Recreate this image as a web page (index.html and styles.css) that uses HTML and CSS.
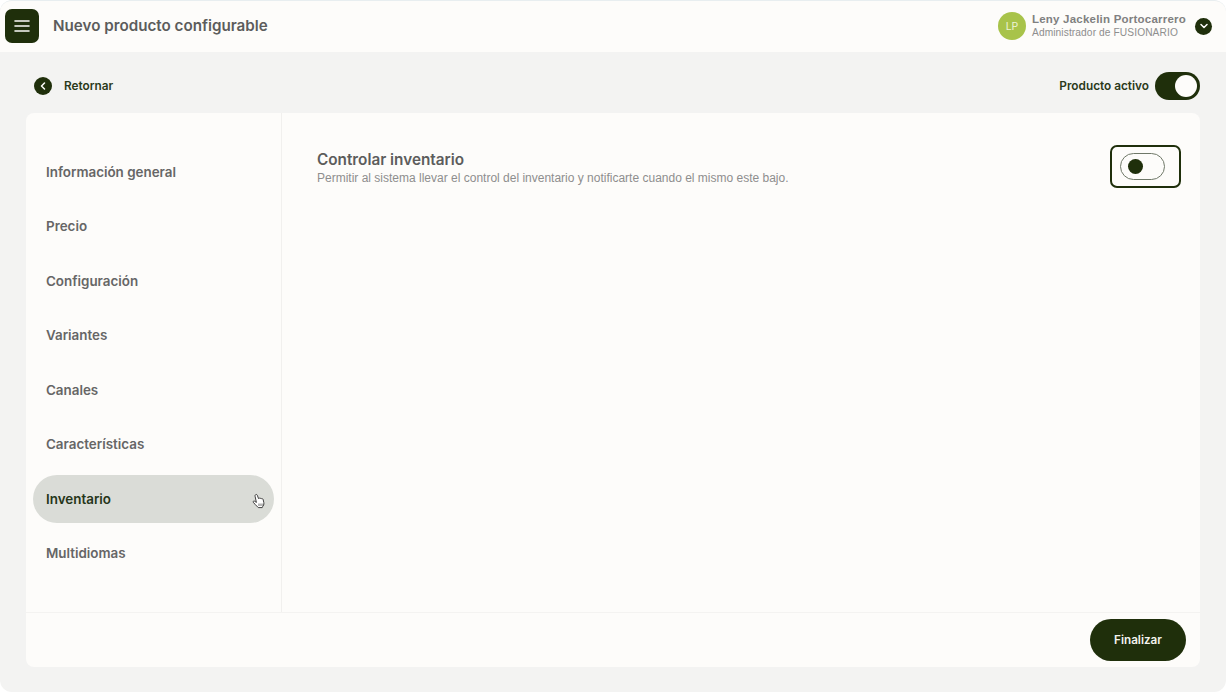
FILE: index.html
```html
<!DOCTYPE html>
<html lang="es">
<head>
  <meta charset="UTF-8">
  <title>Nuevo producto configurable</title>
  <link rel="stylesheet" href="styles.css">
</head>
<body>
  <main class="app">
    <header class="topbar">
      <button class="menu-btn" aria-label="Menu">
        <svg width="16" height="14" viewBox="0 0 16 14"><path d="M1 2h14M1 7h14M1 12h14" stroke="#fdfcfa" stroke-width="1.6" stroke-linecap="round"/></svg>
      </button>
      <h1>Nuevo producto configurable</h1>
      <div class="user">
        <span class="avatar">LP</span>
        <div class="user-text">
          <strong>Leny Jackelin Portocarrero</strong>
          <small>Administrador de FUSIONARIO</small>
        </div>
        <span class="round-icon small">
          <svg width="8" height="6" viewBox="0 0 8 6"><path d="M1 1.500l3 3 3-3" fill="none" stroke="#fdfcfa" stroke-width="1.500" stroke-linecap="round" stroke-linejoin="round"/></svg>
        </span>
      </div>
    </header>

    <section class="content">
      <div class="subbar">
        <a class="back">
          <span class="round-icon">
            <svg width="6" height="8" viewBox="0 0 6 8"><path d="M4.500 1L1.500 4l3 3" fill="none" stroke="#fdfcfa" stroke-width="1.500" stroke-linecap="round" stroke-linejoin="round"/></svg>
          </span>
          Retornar
        </a>
        <div class="active-toggle">
          Producto activo
          <span class="switch-on"><span></span></span>
        </div>
      </div>

      <div class="card">
        <div class="card-body">
          <nav class="side">
            <a>Información general</a>
            <a>Precio</a>
            <a>Configuración</a>
            <a>Variantes</a>
            <a>Canales</a>
            <a>Características</a>
            <a class="current">Inventario
              <svg class="cursor" width="14" height="17" viewBox="0 0 14 17"><path d="M3.600 1.700c.7-.5 1.500-.1 1.800.7l1.100 3.200c.3-.7 1.300-.7 1.600 0 .4-.5 1.300-.4 1.600.2.500-.3 1.200 0 1.400.6l.7 3.100c.3 1.500-.1 2.800-1 3.800l-.6 1.300H6.300L3.400 11.700 1.300 9.300c-.5-.7.3-1.600 1.100-1.200l2 1.300L3.100 3.300c-.2-.6 0-1.200.5-1.600z" fill="#fff" stroke="#2b2b2b" stroke-width=".9" stroke-linejoin="round"/><path d="M7 10.500v2.500M9 10.500v2.500M11 10.500v2.500" stroke="#2b2b2b" stroke-width=".7"/></svg>
            </a>
            <a>Multidiomas</a>
          </nav>
          <div class="panel">
            <div class="panel-text">
              <h2>Controlar inventario</h2>
              <p>Permitir al sistema llevar el control del inventario y notificarte cuando el mismo este bajo.</p>
            </div>
            <div class="focus-ring">
              <span class="switch-off"><span></span></span>
            </div>
          </div>
        </div>
        <footer class="card-foot">
          <button class="finish">Finalizar</button>
        </footer>
      </div>
    </section>
  </main>
</body>
</html>
```

FILE: styles.css
```css
* {
  margin: 0;
  padding: 0;
  box-sizing: border-box;
}

html, body {
  height: 100%;
}

body {
  background: #ffffff;
  font-family: 'Inter', 'Liberation Sans', sans-serif;
  color: #5f5f5f;
  overflow: hidden;
}

.app {
  height: 692px;
  background: #f3f3f2;
  border-radius: 12px;
  border-top: 1px solid #e8eef0;
  overflow: hidden;
}

.topbar {
  height: 51px;
  background: #fdfcfa;
  display: flex;
  align-items: center;
  padding: 0 14px 1px 5px;
  border-radius: 10px 10px 0 0;
}

.menu-btn {
  width: 34px;
  height: 34px;
  border: none;
  border-radius: 7px;
  background: #1f2f0b;
  display: flex;
  align-items: center;
  justify-content: center;
}

.topbar h1 {
  margin-left: 14px;
  font-size: 15.200px;
  line-height: 20px;
  font-weight: 600;
  color: #5c5c5c;
}

.user {
  margin-left: auto;
  display: flex;
  align-items: center;
}

.avatar {
  width: 28px;
  height: 28px;
  border-radius: 50%;
  background: #a8c34a;
  color: #eef3d8;
  font-size: 10.500px;
  display: flex;
  align-items: center;
  justify-content: center;
}

.user-text {
  margin-left: 6px;
  display: flex;
  flex-direction: column;
  font-family: 'Liberation Sans', sans-serif;
}

.user-text strong {
  font-size: 11.500px;
  line-height: 13px;
  font-weight: 700;
  color: #808080;
  letter-spacing: .22px;
}

.user-text small {
  font-size: 10.200px;
  line-height: 13px;
  color: #8e8e8e;
  letter-spacing: .1px;
}

.round-icon {
  width: 18px;
  height: 18px;
  border-radius: 50%;
  background: #1f2f0b;
  display: flex;
  align-items: center;
  justify-content: center;
  flex: none;
}

.round-icon.small {
  width: 17px;
  height: 17px;
  margin-left: 9px;
}

.content {
  padding: 0 26px;
}

.subbar {
  height: 61px;
  display: flex;
  align-items: center;
  justify-content: space-between;
  padding: 7px 0 0 8px;
  font-size: 11.800px;
  font-weight: 600;
  color: #2b3a1a;
}

.back {
  display: flex;
  align-items: center;
  gap: 12px;
}

.active-toggle {
  display: flex;
  align-items: center;
  gap: 6px;
}

.switch-on {
  width: 45px;
  height: 28px;
  border-radius: 14px;
  background: #1f2f0b;
  display: flex;
  align-items: center;
  justify-content: flex-end;
  padding-right: 3px;
}

.switch-on span {
  width: 22px;
  height: 22px;
  border-radius: 50%;
  background: #fdfcfa;
}

.card {
  height: 554px;
  background: #fdfcfa;
  border-radius: 8px;
  display: flex;
  flex-direction: column;
}

.card-body {
  flex: 1;
  display: flex;
  min-height: 0;
}

.side {
  width: 256px;
  border-right: 1px solid #f1f0ee;
  padding: 34.500px 7px 0;
  display: flex;
  flex-direction: column;
  gap: 6.500px;
}

.side a {
  height: 48px;
  border-radius: 24px;
  padding: 0 8px 0 13px;
  display: flex;
  align-items: center;
  justify-content: space-between;
  font-size: 13.400px;
  font-weight: 600;
  color: #666666;
}

.side a.current {
  background: #dadcd7;
  color: #26361a;
}

.cursor {
  margin-top: 6px;
}

.panel {
  flex: 1;
  display: flex;
  justify-content: space-between;
  align-items: flex-start;
  padding: 32px 19px 0 35px;
}

.panel-text {
  padding-top: 5px;
}

.panel h2 {
  font-size: 15.300px;
  line-height: 20px;
  font-weight: 600;
  color: #5c5c5c;
}

.panel p {
  font-family: 'Liberation Sans', sans-serif;
  font-size: 12px;
  line-height: 14px;
  margin-top: 1px;
  color: #8e8e8e;
}

.focus-ring {
  width: 71px;
  height: 43px;
  border: 2px solid #1f2f0b;
  border-radius: 7px;
  display: flex;
  align-items: center;
  padding-left: 8px;
}

.switch-off {
  width: 45px;
  height: 27px;
  border-radius: 14px;
  border: 1px solid #6f7868;
  display: flex;
  align-items: center;
  padding-left: 7px;
}

.switch-off span {
  width: 15px;
  height: 15px;
  border-radius: 50%;
  background: #1f2f0b;
}

.card-foot {
  height: 55px;
  border-top: 1px solid #f4f3f1;
  display: flex;
  align-items: center;
  justify-content: flex-end;
  padding-right: 14px;
}

.finish {
  width: 96px;
  height: 42px;
  border: none;
  border-radius: 21px;
  background: #1f2f0b;
  color: #f3f3ee;
  font-family: 'Inter', 'Liberation Sans', sans-serif;
  font-size: 11.700px;
  font-weight: 600;
}
```
